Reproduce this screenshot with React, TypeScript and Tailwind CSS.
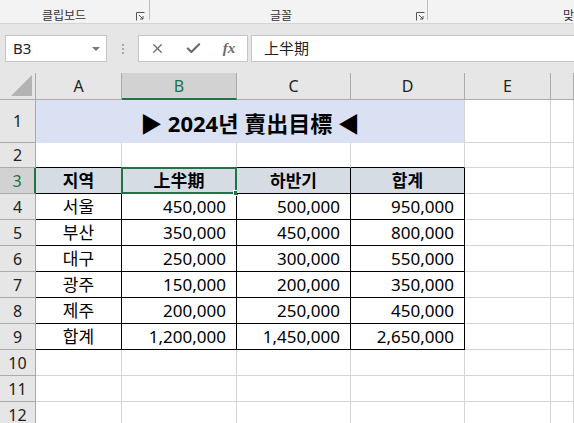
import { X, Check } from "lucide-react";

const font = "font-['Noto_Sans','Noto_Sans_CJK_KR',sans-serif]";

const cols = ["A", "B", "C", "D", "E", ""];

const header = ["지역", "上半期", "하반기", "합계"];

const rows: [string, string, string, string][] = [
  ["서울", "450,000", "500,000", "950,000"],
  ["부산", "350,000", "450,000", "800,000"],
  ["대구", "250,000", "300,000", "550,000"],
  ["광주", "150,000", "200,000", "350,000"],
  ["제주", "200,000", "250,000", "450,000"],
  ["합계", "1,200,000", "1,450,000", "2,650,000"],
];

const Launcher = () => (
  <svg width="9" height="9" viewBox="0 0 9 9" className="text-[#555]">
    <path d="M0.5 0.5h8M0.5 0.5v8" stroke="currentColor" fill="none" />
    <path d="M3 3l4 4M7 4v3h-3" stroke="currentColor" fill="none" />
  </svg>
);

const Sep = () => <div className="h-[20px] w-px shrink-0 bg-[#bdbdbd]" />;

const RowHead = ({ n, active }: { n: number; active?: boolean }) => (
  <div
    className={
      active
        ? "flex items-center justify-center border-b border-[#ababab] border-r-2 border-r-[#217346] bg-[#d2d2d2] text-[16px] text-[#217346]"
        : "flex items-center justify-center border-b border-r border-[#ababab] bg-[#e6e6e6] text-[16px] text-[#222]"
    }
  >
    {n}
  </div>
);

const Blank = ({ black }: { black?: boolean }) => (
  <div
    className={
      black
        ? "border-r border-[#d4d4d4] border-b border-b-black"
        : "border-r border-b border-[#d4d4d4]"
    }
  />
);

export default function App() {
  return (
    <div className={`h-[423px] w-[574px] overflow-hidden bg-[#e6e6e6] ${font}`}>
      {/* ribbon group labels */}
      <div className="flex h-[24px] overflow-hidden border-b border-[#d5d5d5] bg-[#f3f3f3] text-[12px] leading-[14px] text-[#333]">
        <div className="flex w-[149px] shrink-0 items-center pt-[9px]">
          <span className="ml-[42px]">클립보드</span>
          <span className="ml-auto mr-[4px] flex">
            <Launcher />
          </span>
        </div>
        <Sep />
        <div className="flex w-[277px] shrink-0 items-center pt-[9px]">
          <span className="ml-[120px]">글꼴</span>
          <span className="ml-auto mr-[2px] flex">
            <Launcher />
          </span>
        </div>
        <Sep />
        <div className="flex min-w-0 flex-1 items-center whitespace-nowrap pt-[9px]">
          <span className="ml-[135px]">맞춤</span>
        </div>
      </div>

      {/* formula bar */}
      <div className="flex h-[49px] items-start pt-[11px]">
        <div className="ml-[5px] flex h-[27px] w-[102px] items-center justify-between border border-[#c6c6c6] bg-white pl-[7px] pr-[6px] text-[15px] text-[#222]">
          <span>B3</span>
          <span className="h-0 w-0 border-x-[4px] border-t-[4px] border-x-transparent border-t-[#777]" />
        </div>
        <div className="flex h-[27px] w-[31px] flex-col items-center justify-center gap-[2px]">
          <span className="h-[2px] w-[2px] bg-[#aaa]" />
          <span className="h-[2px] w-[2px] bg-[#aaa]" />
          <span className="h-[2px] w-[2px] bg-[#aaa]" />
        </div>
        <div className="flex h-[27px] w-[110px] items-center border border-[#c6c6c6] bg-white text-[#6b6b6b]">
          <span className="flex w-[36px] justify-center">
            <X size={15} strokeWidth={2} />
          </span>
          <span className="flex w-[36px] justify-center">
            <Check size={17} strokeWidth={3} />
          </span>
          <span className="flex w-[36px] justify-center font-['Liberation_Serif',serif] text-[15px] font-bold italic">
            fx
          </span>
        </div>
        <div className="ml-[3px] flex h-[27px] flex-1 items-center border-y border-l border-[#c6c6c6] bg-white pl-[12px] text-[15px] text-[#222]">
          上半期
        </div>
      </div>

      {/* sheet */}
      <div className="grid grid-cols-[36px_86px_115px_114px_114px_86px_1fr] grid-rows-[27px_43px_25px_repeat(10,26px)] bg-white text-[17px] text-black">
        {/* column headers */}
        <div className="relative border-b border-r border-[#ababab] bg-[#e6e6e6]">
          <div className="absolute bottom-[3px] right-[3px] h-0 w-0 border-b-[21px] border-l-[21px] border-b-[#b3b3b3] border-l-transparent" />
        </div>
        {cols.map((c) =>
          c === "B" ? (
            <div
              key={c}
              className="flex items-center justify-center border-r border-[#ababab] border-b-2 border-b-[#217346] bg-[#d2d2d2] text-[16px] text-[#217346]"
            >
              {c}
            </div>
          ) : (
            <div
              key={c || "F"}
              className="flex items-center justify-center border-b border-r border-[#ababab] bg-[#e6e6e6] text-[16px] text-[#222]"
            >
              {c}
            </div>
          )
        )}

        {/* row 1: merged title */}
        <RowHead n={1} />
        <div className="col-span-4 flex items-center justify-center border-r border-[#d4d4d4] bg-[#d9e1f2] pt-[3px] text-[22px] font-bold">
          ▶ 2024년 賣出目標 ◀
        </div>
        <Blank />
        <Blank />

        {/* row 2 */}
        <RowHead n={2} />
        <Blank black />
        <Blank black />
        <Blank black />
        <Blank black />
        <Blank />
        <Blank />

        {/* row 3: table header */}
        <RowHead n={3} active />
        {header.map((h, i) => (
          <div
            key={h}
            className="relative flex items-center justify-center border-b border-r border-black bg-[#d6dce4] font-bold"
          >
            {h}
            {i === 1 && (
              <>
                <div className="absolute -left-[1px] -top-[1px] bottom-[-1px] right-[-1px] border-2 border-[#217346]" />
                <div className="absolute -bottom-[3px] -right-[3px] h-[6px] w-[6px] border border-white bg-[#217346]" />
              </>
            )}
          </div>
        ))}
        <Blank />
        <Blank />

        {/* rows 4-9: data */}
        {rows.map((r, i) => (
          <div key={r[0] + i} className="contents">
            <RowHead n={i + 4} />
            <div className="flex items-center justify-center border-b border-r border-black">
              {r[0]}
            </div>
            {r.slice(1).map((v, j) => (
              <div
                key={j}
                className="flex items-center justify-end border-b border-r border-black pr-[10px]"
              >
                {v}
              </div>
            ))}
            <Blank />
            <Blank />
          </div>
        ))}

        {/* rows 10-12 */}
        {[10, 11, 12].map((n) => (
          <div key={n} className="contents">
            <RowHead n={n} />
            <Blank />
            <Blank />
            <Blank />
            <Blank />
            <Blank />
            <Blank />
          </div>
        ))}
      </div>
    </div>
  );
}
